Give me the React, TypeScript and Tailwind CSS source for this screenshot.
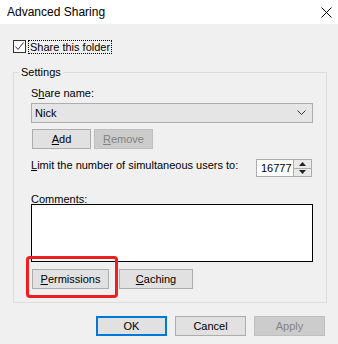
import React from 'react';

const Btn: React.FC<{ children: React.ReactNode; w: string; disabled?: boolean; primary?: boolean }> = ({ children, w, disabled, primary }) => (
  <div
    className={`${w} h-[20px] flex items-center justify-center border ${
      disabled
        ? 'bg-[#cccccc] border-[#bfbfbf] text-[#838383]'
        : primary
        ? 'bg-[#e1e1e1] border-[#0078d7] shadow-[inset_0_0_0_1px_#0078d7]'
        : 'bg-[#e1e1e1] border-[#adadad]'
    }`}
  >
    {children}
  </div>
);

export default function App() {
  return (
    <div className="w-[338px] h-[344px] bg-[#f0f0f0] text-[11px] text-black relative overflow-hidden font-['Liberation_Sans',Arial,sans-serif]">
      {/* title bar */}
      <div className="h-[24px] bg-white flex items-center justify-between pl-[7px] pr-[6px]">
        <span className="text-[12px]">Advanced Sharing</span>
        <svg width="11" height="11" viewBox="0 0 11 11">
          <path d="M0.5 0.5 L10.5 10.5 M10.5 0.5 L0.5 10.5" stroke="#000" strokeWidth="1" />
        </svg>
      </div>

      {/* share checkbox */}
      <div className="mt-[16px] ml-[13px] flex items-center gap-[2px] h-[13px]">
        <div className="w-[13px] h-[13px] border border-[#333333] bg-white flex items-center justify-center">
          <svg width="11" height="11" viewBox="0 0 11 11">
            <path d="M1.5 5.5 L4 8.5 L9.5 1.5" stroke="#333" strokeWidth="1" fill="none" />
          </svg>
        </div>
        <span className="border border-dotted border-black px-[1px] leading-[12px]">Share this folder</span>
      </div>

      {/* settings group */}
      <fieldset className="ml-[13px] mt-[12px] w-[314px] border border-[#dcdcdc] pl-[17px] pr-[13px] pb-[13px]">
        <legend className="-ml-[12px] px-[2px] leading-[14px]">Settings</legend>
        <div className="mt-[7px] leading-[14px]">
          S<span className="underline">h</span>are name:
        </div>
        <div className="mt-[3px] h-[20px] border border-[#adadad] bg-[#e5e5e5] flex items-center justify-between pl-[3px] pr-[6px]">
          <span>Nick</span>
          <svg width="9" height="6" viewBox="0 0 9 6">
            <path d="M0.5 0.5 L4.5 4.5 L8.5 0.5" stroke="#333" strokeWidth="1" fill="none" />
          </svg>
        </div>
        <div className="mt-[6px] ml-[1px] flex gap-[3px]">
          <Btn w="w-[59px]">
            <span className="underline">A</span>dd
          </Btn>
          <Btn w="w-[59px]" disabled>
            <span className="underline">R</span>emove
          </Btn>
        </div>
        <div className="mt-[10px] flex items-start justify-between">
          <span className="leading-[14px] -mt-[1px]">
            <span className="underline">L</span>imit the number of simultaneous users to:
          </span>
          <div className="flex h-[18px] border border-[#adadad] bg-white mr-[1px]">
            <div className="w-[36px] flex items-center pl-[4px] leading-[16px]">
              <span>16777</span>
              <span className="ml-[1px] w-[1px] h-[7px] mt-[4px] bg-[#c9b98a]"></span>
            </div>
            <div className="w-[18px] flex flex-col border-l border-[#adadad]">
              <div className="flex-1 flex items-center justify-center bg-[#e9e9e9] border-b border-[#adadad]">
                <svg width="7" height="4" viewBox="0 0 7 4"><path d="M0 4 L3.5 0 L7 4 Z" fill="#222" /></svg>
              </div>
              <div className="flex-1 flex items-center justify-center bg-[#e9e9e9]">
                <svg width="7" height="4" viewBox="0 0 7 4"><path d="M0 0 L3.5 4 L7 0 Z" fill="#222" /></svg>
              </div>
            </div>
          </div>
        </div>
        <div className="mt-[16px] leading-[12px]">
          C<span className="underline">o</span>mments:
        </div>
        <div className="mt-[-1px] h-[58px] border border-black bg-white"></div>
        <div className="mt-[7px] ml-[1px] flex gap-[10px]">
          <Btn w="w-[77px]">
            <span className="underline">P</span>ermissions
          </Btn>
          <Btn w="w-[74px]">
            <span className="underline">C</span>aching
          </Btn>
        </div>
      </fieldset>

      {/* dialog buttons */}
      <div className="mt-[13px] pr-[13px] flex justify-end gap-[8px]">
        <Btn w="w-[71px]" primary>OK</Btn>
        <Btn w="w-[71px]">Cancel</Btn>
        <Btn w="w-[71px]" disabled>Apply</Btn>
      </div>

      {/* highlight */}
      <div className="absolute left-[26px] top-[256px] w-[92px] h-[42px] border-[3px] border-[#f01e1e] rounded-[4px]"></div>
    </div>
  );
}
